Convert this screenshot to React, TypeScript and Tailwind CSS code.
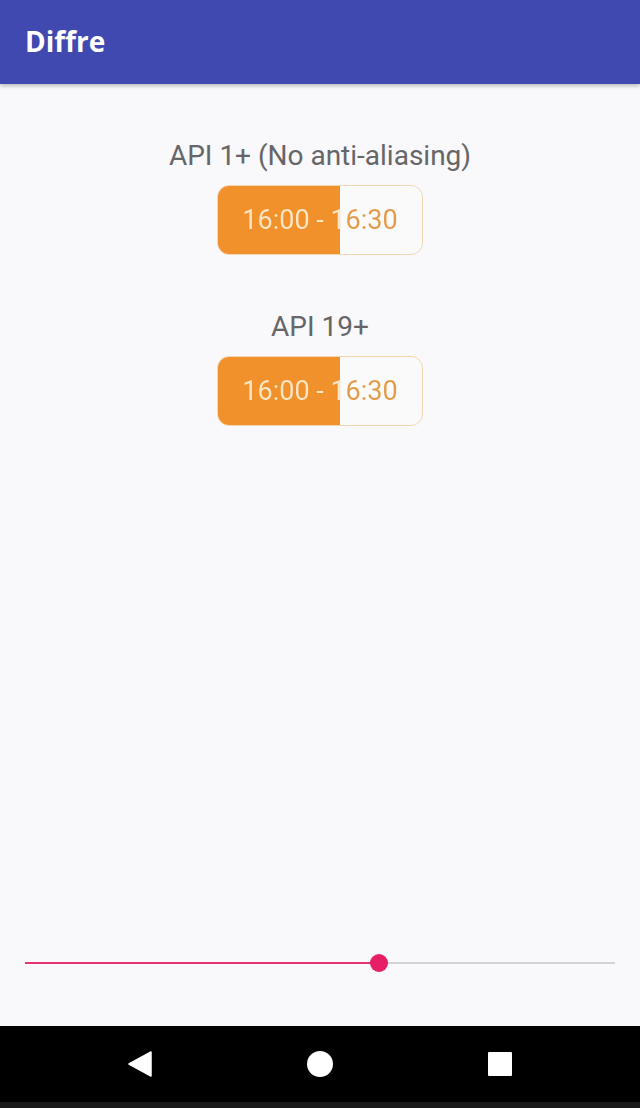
import React from 'react';

const TimeChip: React.FC = () => (
  <div className="relative w-[206px] h-[70px] rounded-[12px] border border-[#f3d6b2] bg-[#fbfafb] overflow-hidden">
    <div className="absolute inset-y-0 left-0 w-[122px] bg-[#f1912b]" />
    {/* one text, coloured in two halves by a hard-stop gradient */}
    <div className="relative h-full flex items-center justify-center text-[27px] bg-[linear-gradient(90deg,#fde6c6_122px,#e39a49_122px)] bg-clip-text text-transparent">
      16:00 - 16:30
    </div>
  </div>
);

const App: React.FC = () => {
  return (
    <div className="w-[640px] h-[1108px] flex flex-col bg-[#f9f8fa] font-['Roboto',sans-serif]">
      <div className="h-[84px] shrink-0 bg-[#3f49b0] flex items-center px-[25px] shadow-[0_2px_4px_rgba(0,0,0,0.25)] relative z-10">
        <span className="text-white text-[28px] font-bold font-['Open_Sans',sans-serif] -mt-[2px]">Diffre</span>
      </div>

      <div className="flex-1 flex flex-col items-center pt-[56px]">
        <div className="text-[28px] text-[#666669] leading-[32px]">API 1+ (No anti-aliasing)</div>
        <div className="mt-[13px]">
          <TimeChip />
        </div>
        <div className="mt-[56px] text-[28px] text-[#666669] leading-[32px]">API 19+</div>
        <div className="mt-[13px]">
          <TimeChip />
        </div>
      </div>

      {/* slider */}
      <div className="h-[64px] shrink-0 px-[25px] flex items-start">
        <div className="relative w-full h-[2px] bg-[#d3d2d4]">
          <div className="absolute inset-y-0 left-0 w-[354px] bg-[#e5336f]" />
          <div className="absolute left-[354px] top-[1px] w-[18px] h-[18px] -translate-x-1/2 -translate-y-1/2 rounded-full bg-[#e61f66]" />
        </div>
      </div>

      <div className="h-[76px] shrink-0 bg-black flex items-center justify-between px-[128px]">
        <svg width="24" height="26" viewBox="0 0 24 26">
          <path d="M23 1 L23 25 L1 13 Z" fill="white" stroke="white" strokeWidth="1.5" strokeLinejoin="round" />
        </svg>
        <div className="w-[26px] h-[26px] rounded-full bg-white" />
        <div className="w-[24px] h-[24px] bg-white rounded-[1px]" />
      </div>
      <div className="h-[6px] shrink-0 bg-[#1a1a1a]" />
    </div>
  );
};

export default App;
